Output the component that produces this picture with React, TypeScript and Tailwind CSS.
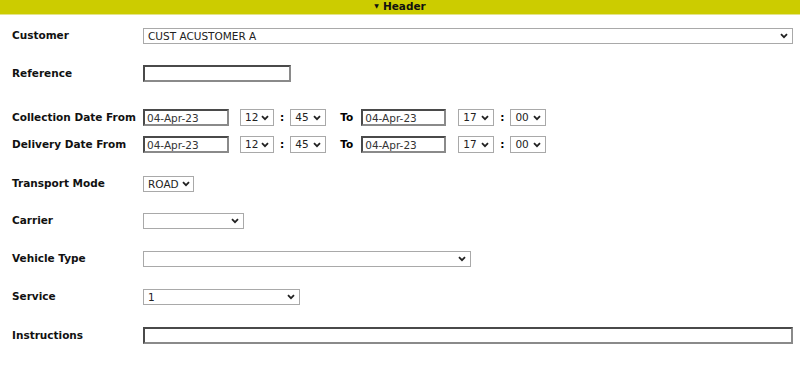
import React from 'react';

const Chevron = () => (
    <svg width="8" height="6" viewBox="0 0 8 6" className="shrink-0">
        <path d="M1 1.2 L4 4.2 L7 1.2" fill="none" stroke="#222" strokeWidth="1.8" />
    </svg>
);

const Sel = ({ w, h = 'h-[16px]', value = '' }: { w: string; h?: string; value?: string }) => (
    <div className={`${w} ${h} flex items-center justify-between gap-[3px] border border-[#a9a9a9] bg-white pl-[4px] pr-[4px] text-[#222]`}>
        <span className="leading-none">{value}</span>
        <Chevron />
    </div>
);

const Box = ({ w, h = 'h-[17px]', value = '' }: { w: string; h?: string; value?: string }) => (
    <input
        readOnly
        defaultValue={value}
        className={`${w} ${h} border-2 border-t-[#4a4a4a] border-l-[#4a4a4a] border-r-[#8a8a8a] border-b-[#8a8a8a] bg-white px-[2px] text-[#333] outline-none`}
    />
);

const Label = ({ children }: { children: React.ReactNode }) => (
    <div className="w-[131px] shrink-0 font-bold text-[#111]">{children}</div>
);

const DateRow = ({ label, className }: { label: string; className: string }) => (
    <div className={`flex items-center ${className}`}>
        <Label>{label}</Label>
        <Box w="w-[86px]" value="04-Apr-23" />
        <div className="ml-[11px]"><Sel w="w-[34px]" h="h-[17px]" value="12" /></div>
        <span className="font-bold mx-[6px]">:</span>
        <Sel w="w-[36px]" h="h-[17px]" value="45" />
        <span className="font-bold ml-[14px] w-[21px]">To</span>
        <Box w="w-[85px]" value="04-Apr-23" />
        <div className="ml-[12px]"><Sel w="w-[36px]" h="h-[17px]" value="17" /></div>
        <span className="font-bold mx-[6px]">:</span>
        <Sel w="w-[36px]" h="h-[17px]" value="00" />
    </div>
);

export default function App() {
    return (
        <div className="w-[800px] h-[368px] bg-white text-[10.5px] overflow-hidden" style={{ fontFamily: '"DejaVu Sans", Verdana, sans-serif' }}>
            {/* Header bar */}
            <div className="h-[15px] bg-[#cccc00] border-b border-[#e4e48a] flex items-center justify-center font-bold text-[#111]">
                <span className="text-[6px] mr-[4px] -mt-[4px]">▼</span>
                <span>Header</span>
            </div>

            <div className="pl-[12px] pr-[7px]">
                <div className="flex items-center mt-[13px]">
                    <Label>Customer</Label>
                    <Sel w="flex-1" value="CUST ACUSTOMER A" />
                </div>

                <div className="flex items-center mt-[21px]">
                    <Label>Reference</Label>
                    <Box w="w-[148px]" />
                </div>

                <DateRow label="Collection Date From" className="mt-[27px]" />
                <DateRow label="Delivery Date From" className="mt-[10px]" />

                <div className="flex items-center mt-[23px]">
                    <Label>Transport Mode</Label>
                    <Sel w="w-[51px]" value="ROAD" />
                </div>

                <div className="flex items-center mt-[21px]">
                    <Label>Carrier</Label>
                    <Sel w="w-[101px]" />
                </div>

                <div className="flex items-center mt-[22px]">
                    <Label>Vehicle Type</Label>
                    <Sel w="w-[328px]" />
                </div>

                <div className="flex items-center mt-[22px]">
                    <Label>Service</Label>
                    <Sel w="w-[157px]" value="1" />
                </div>

                <div className="flex items-center mt-[22px]">
                    <Label>Instructions</Label>
                    <Box w="flex-1" />
                </div>
            </div>
        </div>
    );
}
